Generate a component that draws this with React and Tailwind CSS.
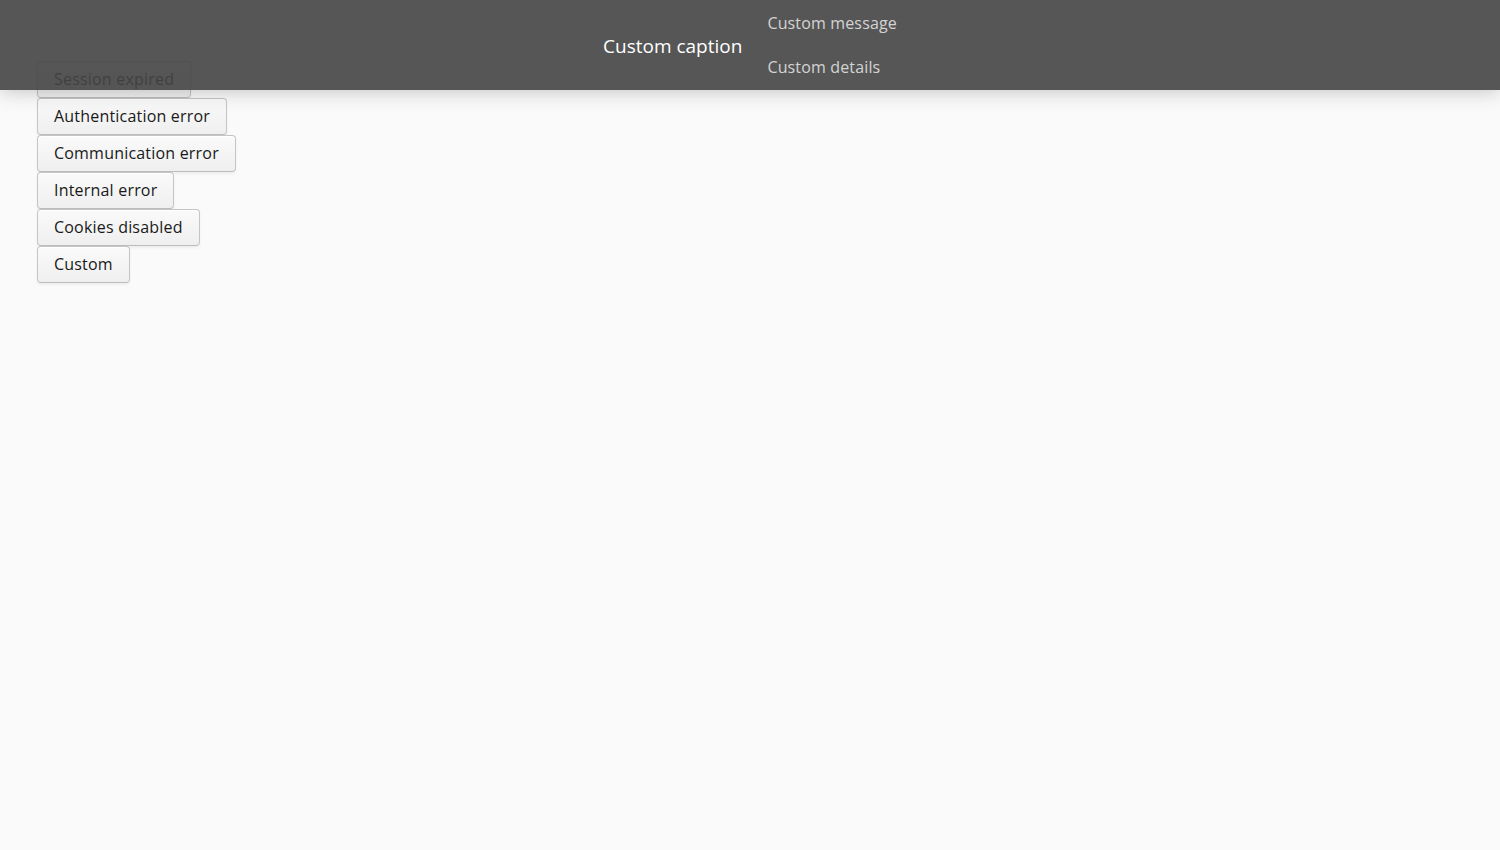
export default function App() {
  const buttons = [
    'Session expired',
    'Authentication error',
    'Communication error',
    'Internal error',
    'Cookies disabled',
    'Custom',
  ];

  return (
    <div
      className="relative min-h-[850px] w-full bg-[#fafafa] text-[#222]"
      style={{ fontFamily: '"Open Sans", "Noto Sans", sans-serif' }}
    >
      {/* button column */}
      <div className="flex flex-col items-start pl-[37px] pt-[61px]">
        {buttons.map((label) => (
          <button
            key={label}
            className="h-[37px] rounded-[4px] border border-[#c5c5c5] border-b-[#bcbcbc] bg-gradient-to-b from-[#fafafa] to-[#efefef] px-[16px] text-[16px] leading-[35px] tracking-[0.2px] text-[#191919] shadow-[inset_0_1px_0_white,0_2px_3px_rgba(0,0,0,0.05)]"
          >
            {label}
          </button>
        ))}
      </div>

      {/* system notification */}
      <div className="absolute left-0 top-0 flex h-[90px] w-full items-center justify-center bg-[rgba(68,68,68,0.9)] shadow-[0_0_20px_rgba(0,0,0,0.25)]">
        <div className="flex items-center">
          <div className="pt-[2px] text-[19px] leading-none text-white">Custom caption</div>
          <div className="ml-[25px] flex flex-col gap-[22px] text-[16px] leading-[22px] tracking-[0.15px] text-[rgba(255,255,255,0.75)]">
            <div>Custom message</div>
            <div>Custom details</div>
          </div>
        </div>
      </div>
    </div>
  );
}
